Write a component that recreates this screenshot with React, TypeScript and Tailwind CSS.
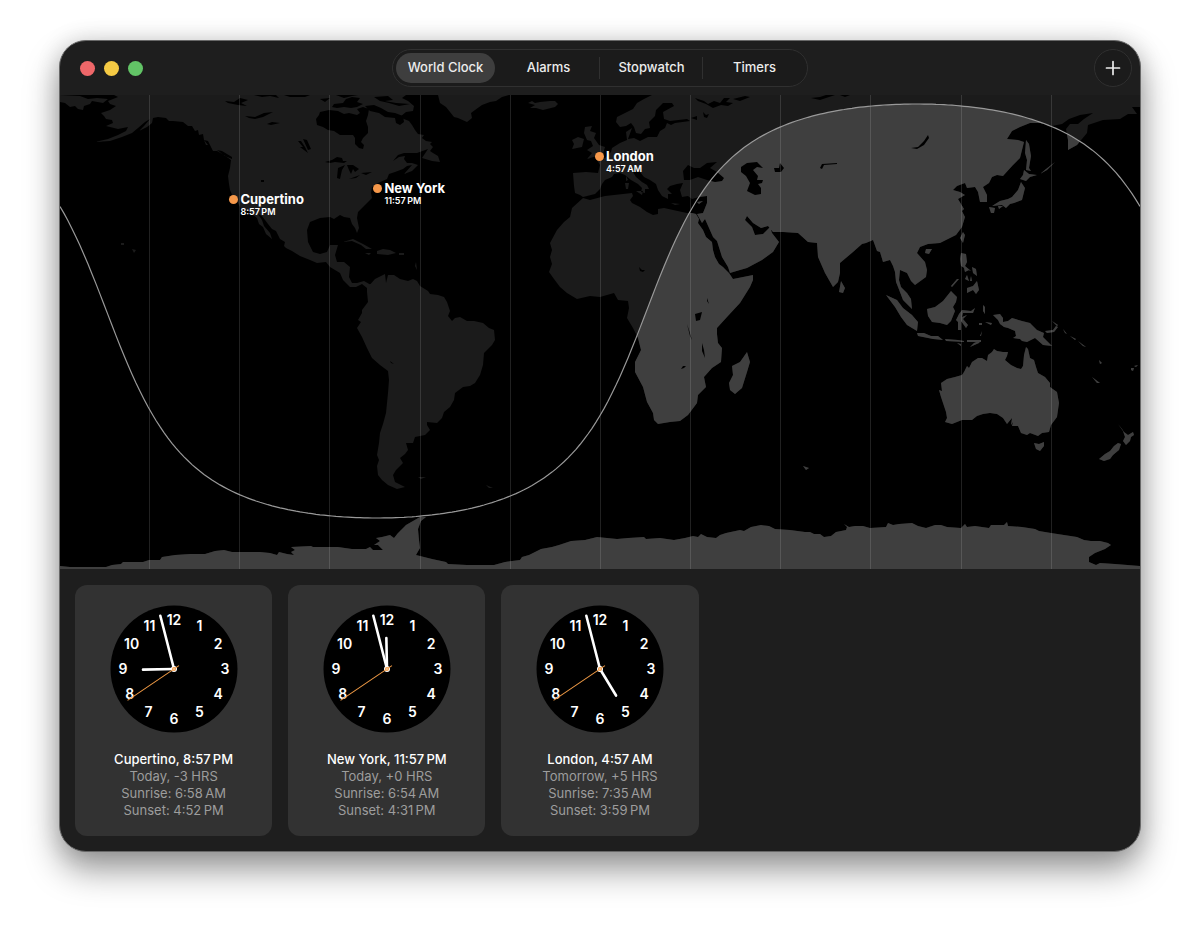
import { useState } from "react";

const tabs = ["World Clock", "Alarms", "Stopwatch", "Timers"];

const cities = [
  { name: "Cupertino", time: "8:57\u2009PM", lat: 37.3, lon: -122.2, hour: 8, offset: "Today, -3 HRS", sunrise: "6:58\u2009AM", sunset: "4:52\u2009PM" },
  { name: "New York", time: "11:57\u2009PM", lat: 40.9, lon: -74.2, hour: 11, offset: "Today, +0 HRS", sunrise: "6:54\u2009AM", sunset: "4:31\u2009PM" },
  { name: "London", time: "4:57\u2009AM", lat: 51.6, lon: -0.3, hour: 4, offset: "Tomorrow, +5 HRS", sunrise: "7:35\u2009AM", sunset: "3:59\u2009PM" },
];

// Map canvas: x 60..1140 is 360° of longitude, 3 units per degree, equator at y = 311
const MAP = { left: 60, top: 95, width: 1080, height: 474, equator: 311 };
const SUN = { lon: 105.5, lat: -21 };

const land = [
  // Chukotka, east of the date line
  "M60 95L60 102 65 103 70 107 75 106 78 109 83 110 84 106 90 104 92 101 103 103 108 99 97 98 88 99 80 96Z",
  // North and Central America
  "M114 95L118 97 108 101 110 104 116 106 110 110 101 113 104 116 106 119 112 120 113 123 106 126 118 129 128 127 126 131 118 135 108 139 95 142 110 141 122 137 132 133 138 128 145 122 150 119 144 126 139 131 147 127 152 123 153 118 158 117 166 118 169 121 173 121 183 122 188 126 192 126 195 131 198 130 199 135 203 134 204 140 208 141 210 145 213 151 217 151 224 155 231 160 230 168 228 176 229 184 230 190 233 197 238 203 241 209 248 211 253 215 257 218 259 224 263 227 266 234 272 239 270 233 264 226 262 220 258 214 262 216 268 224 272 229 276 231 280 239 285 242 284 246 286 248 292 251 300 256 310 260 317 263 326 262 330 267 340 273 343 280 350 287 356 287 362 284 367 288 371 285 364 281 357 283 352 283 349 277 350 267 344 262 337 262 335 255 338 245 330 245 327 252 320 254 313 252 308 242 307 230 310 222 320 218 330 217 334 219 340 215 344 217 350 218 352 224 355 228 357 233 359 228 357 218 358 212 365 205 372 198 371 193 372 187 378 183 387 179 389 174 395 172 403 169 407 166 412 165 404 174 412 171 418 165 412 163 407 163 404 159 405 156 399 157 393 161 398 155 404 153 417 153 428 149 422 158 432 161 440 162 438 156 433 153 430 151 433 147 430 144 432 142 426 141 422 138 424 135 418 134 415 130 412 125 409 121 404 119 400 117 406 112 413 111 414 106 408 101 402 98 406 95Z",
  // Vancouver Island and Haida Gwaii
  "M217 150L222 151 232 157 232 159 225 156ZM204 140L208 145 206 145Z",
  // Caribbean
  "M343 242L353 239 363 244 372 249 366 249 361 245 352 241ZM377 251L383 249 390 250 396 253 388 255 377 254ZM365 253H371L369 255ZM399 253H404V255H399ZM416 262L417 270 415 266Z",
  // Greenland
  "M438 95L440 103 446 107 450 112 454 117 458 118 467 122 472 118 471 113 475 110 482 105 490 102 496 101 502 97 509 95Z",
  // Iceland
  "M528 103L532 101 535 103 540 102 550 101 555 101 558 104 555 107 543 110 536 108 530 108 535 105Z",
  // South America
  "M367 288L367 292 368 302 362 310 362 313 358 320 361 322 357 328 362 337 367 348 372 358 380 365 388 371 389 380 388 393 386 413 383 424 380 433 379 443 377 455 379 460 377 466 378 475 382 480 388 485 397 489 405 487 395 482 393 475 396 470 403 463 400 458 405 454 408 450 406 443 413 443 415 437 425 435 430 430 427 425 427 422 437 423 442 418 444 412 450 407 454 400 455 393 463 387 470 386 475 383 480 375 483 365 484 353 492 345 495 340 494 330 489 328 483 323 474 321 467 321 460 317 455 318 452 321 448 316 450 311 447 302 444 297 438 295 430 294 428 291 420 286 417 281 413 279 408 281 400 279 394 275 388 275 386 283 385 274 375 279Z",
  "M418 477L426 477 421 479ZM486 485L493 488 489 488Z",
  // Africa
  "M583 198L590 200 605 196 623 194 632 193 633 196 630 200 632 203 640 207 647 212 653 215 658 214 658 209 664 208 673 210 687 213 692 213 696 214 699 219 698 223 703 230 706 237 712 242 713 250 715 257 719 264 723 267 729 273 733 279 743 277 753 275 753 280 750 287 740 303 727 317 717 328 717 334 718 343 722 348 721 362 712 368 704 377 706 387 698 395 697 403 688 415 680 421 670 422 658 424 654 420 653 413 647 402 643 387 635 372 635 362 641 350 638 338 633 328 627 318 629 308 628 301 618 300 614 293 600 297 590 296 577 299 567 293 560 287 554 279 549 272 552 264 550 257 552 250 550 243 557 230 564 222 570 217 572 208Z",
  // Madagascar
  "M747 352L750 362 747 372 742 388 735 394 730 390 729 383 733 375 732 366 740 362Z",
  // Europe and Asia
  "M573 173L574 186 575 193 580 195 583 197 595 194 600 189 602 184 605 180 612 177 614 174 620 173 625 175 631 180 638 184 642 188 641 192 645 193 645 189 649 189 647 185 642 182 636 177 633 172 640 172 644 177 650 180 656 184 658 190 662 196 668 199 668 194 672 194 667 189 670 186 677 184 683 183 680 190 682 197 688 196 692 199 699 197 707 196 707 203 703 213 697 214 702 223 705 219 713 237 717 241 722 257 728 267 730 273 740 270 747 268 762 260 773 252 779 242 772 233 770 227 763 234 755 235 752 227 745 220 747 216 753 223 761 228 768 226 773 232 783 232 798 233 808 242 817 243 818 257 825 273 833 287 838 282 840 273 840 263 853 252 862 244 866 243 873 240 877 251 880 252 883 262 890 260 893 266 895 272 896 282 898 287 903 300 912 309 911 299 907 293 901 287 899 280 900 270 907 273 911 281 915 285 926 277 927 270 925 262 917 253 920 247 928 244 940 243 950 238 956 235 962 227 965 217 962 211 964 209 958 199 965 195 960 192 953 190 957 186 965 183 967 188 975 187 978 192 980 202 987 202 987 195 983 187 989 183 992 177 997 175 1003 176 1013 165 1020 158 1024 142 1018 140 1007 139 1012 131 1020 127 1030 123 1040 123 1052 126 1062 124 1069 119 1080 115 1093 113 1084 119 1078 124 1070 124 1066 129 1068 140 1068 150 1077 145 1087 133 1088 125 1103 120 1120 119 1128 114 1137 114 1132 107 1140 107V95H652L644 99 637 103 633 109 627 112 617 117 616 122 620 127 626 126 631 123 634 127 636 133 641 134 645 129 650 128 649 122 655 116 656 110 663 103 672 103 674 106 663 112 664 119 670 121 687 119 690 121 675 123 671 125 667 123 665 128 660 131 657 137 648 137 640 141 634 138 628 139 632 128 626 132 627 140 620 143 612 148 611 152 605 158 597 160 600 165 598 173 586 172Z",
  // British Isles
  "M585 127L592 126 590 131 596 133 594 138 599 145 605 147 603 154 587 159 592 153 587 150 593 146 591 141 587 140 584 133ZM578 137L584 139 582 147 572 149 574 144 572 140Z",
  // Mediterranean islands
  "M626 176L628 180 626 181ZM625 183L629 183 628 189 626 189ZM636 191L643 191 642 195ZM671 203L680 204 675 205ZM697 202L703 201 699 204Z",
  // Sri Lanka, Hainan, Taiwan
  "M841 281L845 288 843 293 839 292ZM926 249L932 249 929 254 925 253ZM963 232L965 235 963 243 960 238Z",
  // Sakhalin and Japan
  "M1026 140L1029 144 1031 156 1029 168 1031 171 1026 170 1027 160 1025 153ZM1024 170L1029 174 1037 175 1030 177 1026 181 1020 179 1023 175ZM1021 182L1025 188 1022 200 1014 203 1010 204 1006 208 1002 205 992 206 1000 201 1008 199 1012 197 1018 190ZM989 207L995 208 994 213 991 213ZM998 206L1003 206 999 209Z",
  "M1040 174L1046 169 1055 162 1047 170Z",
  // Philippines
  "M961 253L966 254 967 262 965 266 971 271 966 269 961 266 960 259ZM964 268L969 270 965 272ZM972 267L976 269 977 276 973 273ZM967 275L969 281 965 279ZM971 276L972 281 970 281ZM977 281L979 290 976 294 973 290 967 293 967 288 973 286ZM957 279L959 279 952 287 951 286Z",
  // Borneo, Sumatra, Java
  "M951 291L957 297 956 302 953 307 955 311 951 321 947 325 940 323 932 322 928 316 927 309 935 307 943 301ZM886 295L897 300 903 308 912 315 918 322 917 331 907 325 901 317 895 307ZM917 333L924 333 931 336 938 336 943 340 933 339 918 336Z",
  "M945 339L958 340 964 341 964 342 946 341ZM967 340H981V342H967ZM957 343L961 344 961 346ZM970 347L974 343 981 340 979 343Z",
  // Sulawesi and the Moluccas
  "M959 314L962 310 971 311 975 308 973 313 963 313 962 317 967 315 963 319 968 325 966 328 961 321 961 330 958 330 958 322 956 320ZM983 305L985 307 985 314 983 311ZM979 323H982V325H979ZM985 322L992 323 991 325ZM980 336L982 331 981 336Z",
  // New Guinea and Melanesia
  "M993 315L1000 314 1003 318 1003 322 1008 321 1012 318 1022 321 1030 323 1037 330 1044 333 1043 337 1048 342 1052 346 1043 345 1035 338 1027 342 1022 341 1020 339 1013 338 1016 336 1015 331 1008 328 1004 327 1000 324 998 320ZM1045 331L1053 330 1056 326 1058 327 1054 332 1047 333ZM1052 321L1058 325 1057 326ZM1063 329L1067 334 1065 333ZM1070 336L1076 339 1075 340ZM1078 341L1086 347 1083 346ZM1092 377L1100 383 1097 383ZM1131 368L1134 368 1133 371 1131 370ZM1134 366L1138 365 1136 367ZM1099 360L1102 363 1100 364Z",
  // Australia and Tasmania
  "M941 383L947 379 955 377 962 375 964 372 967 366 969 368 972 362 978 358 982 358 987 361 988 355 992 352 994 349 997 351 1003 352 1008 352 1007 356 1005 360 1011 365 1017 368 1021 369 1023 366 1024 355 1026 347 1028 349 1030 358 1034 360 1036 367 1038 373 1045 377 1050 383 1050 387 1057 392 1059 403 1057 417 1051 425 1049 432 1042 433 1038 436 1030 433 1027 435 1021 433 1018 426 1012 426 1013 422 1011 425 1012 418 1007 424 1003 418 997 414 990 413 983 414 977 416 972 420 962 420 952 424 945 422 947 418 946 412 943 403 941 397 939 390 942 391ZM1034 443L1039 444 1044 442 1044 446 1040 451 1036 449Z",
  // New Zealand
  "M1118 424L1122 429 1124 432 1128 435 1133 432 1134 435 1131 437 1130 441 1126 445 1123 441 1125 437 1123 431ZM1118 443L1121 444 1119 450 1113 455 1110 459 1104 461 1099 459 1105 454 1110 451 1114 446Z",
  // Hawaii and Kerguelen
  "M132 249L136 250 134 253ZM121 243H124V245H121ZM803 466L809 468 806 470Z",
  // Antarctica
  "M60 566L70 567 106 567 112 565 121 564 123 562 143 562 149 560 160 560 162 557 175 555 190 554 205 554 215 551 224 550 232 552 260 552 270 553 277 555 279 552 287 554 294 555 291 552 295 550 291 547 311 546 313 547 338 547 352 549 366 549 370 547 373 550 383 550 378 545 374 545 380 541 376 538 382 537 390 535 394 538 398 533 401 530 406 525 413 521 420 517 426 517 421 521 418 529 419 540 420 548 416 555 432 559 446 562 448 564 467 565 494 565 505 562 520 560 522 557 529 555 541 549 552 547 559 545 571 541 585 540 597 537 617 539 628 538 644 537 646 539 660 538 674 540 685 538 693 536 698 537 701 534 707 537 716 538 720 535 726 533 740 530 744 531 751 527 761 525 769 526 775 529 790 530 805 532 810 532 814 534 820 534 824 537 831 536 836 532 846 530 847 527 844 524 849 527 855 526 863 526 870 528 886 527 888 523 893 525 899 524 912 523 918 526 926 528 935 525 941 525 947 527 961 528 965 524 967 527 975 526 989 528 991 525 1004 525 1007 522 1008 526 1022 527 1035 529 1039 531 1051 533 1064 535 1077 537 1084 540 1091 541 1100 541 1108 543 1111 545 1105 549 1095 553 1089 557 1089 562 1096 565 1100 563 1115 564 1140 566V569H60Z",
].join("");

const water = [
  // Hudson Bay and the straits around Baffin Island
  "M317 125L316 119 319 115 320 112 329 110 338 111 344 114 349 113 357 115 360 113 357 109 363 107 369 109 368 115 366 121 368 127 368 133 363 138 361 142 364 145 363 149 359 148 355 144 355 138 353 135 347 135 340 135 334 131 328 130 323 127Z",
  "M337 108L332 107 334 104 343 103 346 99 352 97 360 98 357 102 363 104 357 107 351 108 344 107ZM365 106L374 105 381 108 388 112 395 113 403 116 404 122 400 125 396 123 395 118 385 117 379 113 370 111ZM374 97L388 96 393 100 385 101 396 103 410 104 399 106 389 103 380 101ZM320 99L330 98 325 102Z",
  // Arctic inlets and northern lakes
  "M225 101L234 102 240 98 248 100 241 103 247 106 238 105 228 103ZM245 116L255 117 264 113 273 112 263 117 255 119 249 118ZM267 124L272 122 280 123 271 125ZM254 95H276L279 98 270 96 262 97ZM284 95H310L305 97 290 97ZM336 95H358L352 96 344 98Z",
  "M298 141L303 147 300 147 308 153 305 147 301 141ZM303 139L307 140 311 149 308 150ZM261 180H264V182H261Z",
  // Great Lakes
  "M325 162L332 160 337 157 342 158 343 161 347 161 344 163 335 162 330 163ZM338 168L345 165 342 170 340 179 337 178ZM347 165L353 165 359 169 355 172 353 169 351 174 349 170ZM349 179L360 175 356 178ZM361 173L372 172 366 175Z",
  // Black, Caspian and Aral seas
  "M683 171L688 165 694 168 700 168 707 163 717 162 710 168 717 172 724 178 722 181 715 182 707 180 698 177 690 180 684 180ZM741 167L747 163 757 162 763 168 757 167 753 170 758 176 757 180 763 180 762 183 758 184 761 188 761 194 755 195 747 191 750 183 746 176 741 172ZM774 168L779 168 780 163 784 168 781 172 775 172Z",
  // Balkhash, Baikal
  "M820 168L822 164 837 163 837 164 824 165 822 169ZM911 148L918 147 924 141 928 135 929 138 924 145 917 149Z",
  // White Sea and Gulf coasts of northern Russia
  "M695 98L704 101 708 104 714 101 720 103 724 98 730 98 726 102 733 103 728 106 721 105 713 108 706 104 698 101ZM733 99L745 96 750 97 740 101ZM691 118L697 116 697 120ZM703 112L706 115 709 114 707 118 704 117ZM811 98L820 97 826 95H835L820 100ZM840 95H850L845 97Z",
  // African lakes
  "M695 314L702 312 700 320 696 321ZM687 324L689 330 692 340 690 336ZM702 343L704 350 705 358 702 351ZM707 298L709 304 707 301ZM639 267L642 270 645 270 643 272 640 271ZM681 369L683 366 686 366 684 368ZM390 361L394 364 391 363Z",
].join("");

// Latitude on the day/night edge for each longitude
function terminator() {
  const rad = Math.PI / 180;
  const points: string[] = [];
  for (let x = MAP.left; x <= MAP.left + MAP.width; x += 4) {
    const lon = (x - MAP.left) / 3 - 180;
    const lat = Math.atan(-Math.cos((lon - SUN.lon) * rad) / Math.tan(SUN.lat * rad)) / rad;
    points.push(`${x} ${(MAP.equator - lat * 3).toFixed(1)}`);
  }
  return "M" + points.join("L");
}

const edge = terminator();

function WorldMap() {
  return (
    <section aria-label="World map" className="relative overflow-hidden bg-black">
      <svg viewBox="60 95 1080 474" className="block h-auto w-full" aria-hidden="true">
        <defs>
          <clipPath id="day">
            <path d={`${edge}L1140 569L60 569Z`} />
          </clipPath>
        </defs>
        <path d={land} fill="#1b1b1b" />
        <path d={land} fill="#3f3f3f" clipPath="url(#day)" />
        <path d={water} fill="#000" />
        {[1, 2, 3, 4, 5, 6, 7, 8, 9, 10, 11].map(i => (
          <rect key={i} x={Math.round(59 + i * 90.15)} y="95" width="1" height="474" fill="#fff" opacity="0.13" />
        ))}
        <path d={edge} fill="none" stroke="#999" strokeWidth="1.2" />
      </svg>

      {cities.map(city => (
        <div
          key={city.name}
          className="absolute -mt-[7px] -ml-1 flex gap-0.5"
          style={{
            left: `${((city.lon + 180) / 360) * 100}%`,
            top: `${((MAP.equator - city.lat * 3 - MAP.top) / MAP.height) * 100}%`,
          }}
        >
          <span className="mt-[3px] size-[9px] shrink-0 rounded-full bg-[#f6984a]" />
          <div className="whitespace-nowrap text-white">
            <div className="text-[13px] leading-[14px] font-bold">{city.name}</div>
            <div className="text-[9px] leading-[11px] font-semibold">{city.time}</div>
          </div>
        </div>
      ))}
    </section>
  );
}

function ClockFace({ hour }: { hour: number }) {
  const hourAngle = (hour + 57.6 / 60) * 30;
  return (
    <svg viewBox="-64 -64 128 128" className="size-32" aria-hidden="true">
      <circle r="63.5" fill="#000" />
      {[1, 2, 3, 4, 5, 6, 7, 8, 9, 10, 11, 12].map(n => (
        <text
          key={n}
          x={Math.sin((n * Math.PI) / 6) * (n > 9 ? 49 : 51)}
          y={-Math.cos((n * Math.PI) / 6) * 49.5 + 5}
          textAnchor="middle"
          fill="#fff"
          fontSize="14"
          fontWeight="600"
        >
          {n}
        </text>
      ))}
      <g stroke="#fff" strokeLinecap="round" strokeWidth="2.6">
        <line y1="0" y2="-31" transform={`rotate(${hourAngle})`} />
        <line y1="0" y2="-55" transform="rotate(-14.4)" />
      </g>
      <circle r="3" fill="#fff" />
      <line y1="6" y2="-56" stroke="#f09a45" strokeWidth="1" transform="rotate(236)" />
      <circle r="2" fill="#f09a45" />
      <circle r="0.7" fill="#fff" />
    </svg>
  );
}

function ClockCard({ city }: { city: typeof cities[0] }) {
  return (
    <article className="flex flex-col items-center rounded-xl bg-[#323232] pt-5 pb-[17px]">
      <ClockFace hour={city.hour} />
      <div className="mt-[18px] text-center text-[13px] leading-[17px] whitespace-nowrap text-[#9d9d9d]">
        <h2 className="font-medium text-white">{city.name}, {city.time}</h2>
        <p>{city.offset}</p>
        <p>Sunrise: {city.sunrise}</p>
        <p>Sunset: {city.sunset}</p>
      </div>
    </article>
  );
}

export default function App() {
  const [active, setActive] = useState("World Clock");

  return (
    <div className="min-h-screen bg-white px-[59px] pt-10 pb-[78px] font-['Inter','Liberation_Sans',sans-serif]">
      <main className="overflow-hidden rounded-[27px] border border-[#686868] bg-[#1e1e1e] shadow-[0_18px_34px_rgba(0,0,0,0.4),0_0_24px_rgba(0,0,0,0.14)]">
        <header className="grid h-[54px] grid-cols-[1fr_auto_1fr] items-center px-2">
          <div className="flex gap-[9px] pl-3">
            <button aria-label="Close" className="size-[15px] rounded-full bg-[#ee6769]" />
            <button aria-label="Minimize" className="size-[15px] rounded-full bg-[#f5ca44]" />
            <button aria-label="Zoom" className="size-[15px] rounded-full bg-[#62c466]" />
          </div>

          <nav className="flex h-[38px] items-center gap-1 rounded-full border border-[#303030] bg-[#1b1b1b] px-[3px]">
            {tabs.map((tab, i) => (
              <button
                key={tab}
                onClick={() => setActive(tab)}
                className={`relative h-[30px] w-[99px] rounded-full text-[13px] font-medium text-[#ececec] ${active === tab ? "bg-[#3e3e3e]" : ""}`}
              >
                {tab}
                {/* Hairline between two idle tabs */}
                {i > 0 && active !== tab && active !== tabs[i - 1] && (
                  <span className="absolute inset-y-1 -left-[3px] w-px bg-[#303030]" />
                )}
              </button>
            ))}
          </nav>

          <button aria-label="Add city" className="flex size-[38px] items-center justify-center justify-self-end rounded-full border border-[#303030] bg-[#1b1b1b] text-[#ececec]">
            <svg width="16" height="16" viewBox="0 0 16 16" fill="none">
              <path d="M8 1.5v13M1.5 8h13" stroke="currentColor" strokeWidth="1.7" strokeLinecap="round" />
            </svg>
          </button>
        </header>

        <WorldMap />

        <section aria-label="Clocks" className="grid grid-cols-5 gap-4 px-[15px] pt-4 pb-[15px]">
          {cities.map(city => <ClockCard key={city.name} city={city} />)}
        </section>
      </main>
    </div>
  );
}
